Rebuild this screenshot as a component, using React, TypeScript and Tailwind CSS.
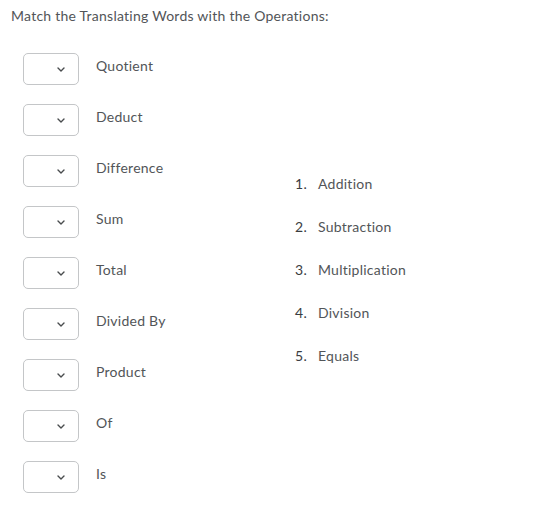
const words = ["Quotient", "Deduct", "Difference", "Sum", "Total", "Divided By", "Product", "Of", "Is"];
const ops = ["Addition", "Subtraction", "Multiplication", "Division", "Equals"];

function Chevron() {
  return (
    <svg width="8" height="5" viewBox="0 0 8 5" className="text-[#494c4e]">
      <path d="M1 1l3 3 3-3" fill="none" stroke="currentColor" strokeWidth="1.4" strokeLinecap="round" strokeLinejoin="round" />
    </svg>
  );
}

export default function App() {
  return (
    <div className="min-h-[507px] w-[534px] bg-white font-['Lato','Liberation_Sans',sans-serif] tracking-[0.25px] text-[#525558]">
      <p className="px-[11px] pt-[7px] text-[14px] leading-[18px]">
        Match the Translating Words with the Operations:
      </p>

      <div className="mt-[28px] flex items-center pl-[23px]">
        {/* Left: dropdowns */}
        <div className="flex w-[272px] flex-col gap-[19px]">
          {words.map((w) => (
            <div key={w} className="flex items-start gap-[17px]">
              <div className="flex h-[32px] w-[56px] items-center justify-end rounded-[5px] border border-[#c4c6c8] pr-[13px]">
                <Chevron />
              </div>
              <span className="pt-[4px] text-[14px] leading-[18px]">{w}</span>
            </div>
          ))}
        </div>

        {/* Right: operations */}
        <ol className="-mt-[6px] flex flex-col gap-[25px]">
          {ops.map((o, i) => (
            <li key={o} className="flex items-baseline text-[14px] leading-[18px]">
              <span className="w-[23px] text-[#3a3d3f]">{i + 1}.</span>
              <span>{o}</span>
            </li>
          ))}
        </ol>
      </div>
    </div>
  );
}
